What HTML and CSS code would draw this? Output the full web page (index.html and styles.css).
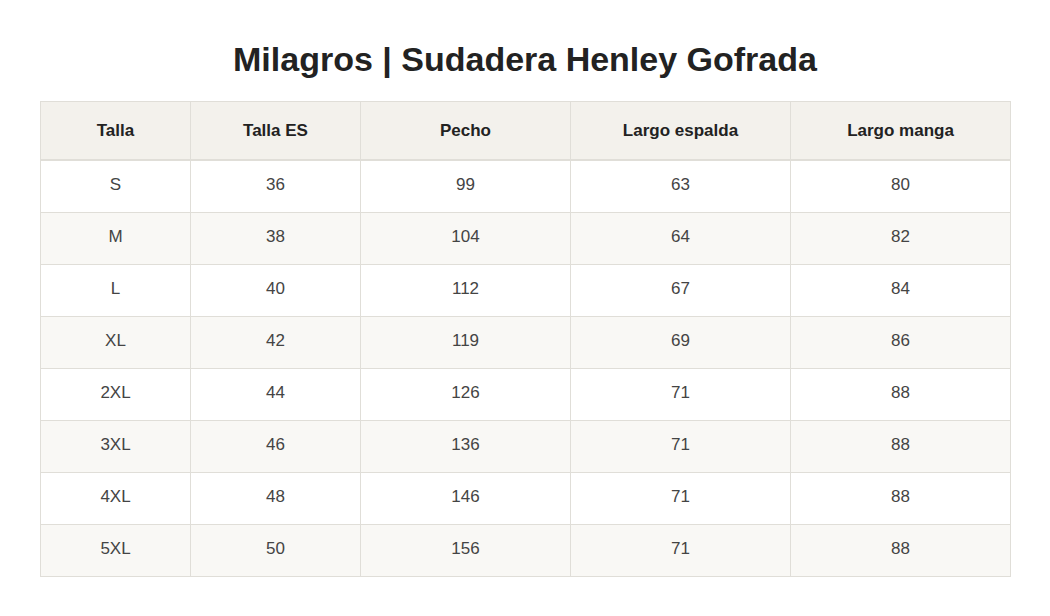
FILE: index.html
```html
<!DOCTYPE html>
<html lang="es">
<head>
<meta charset="utf-8">
<title>Milagros | Sudadera Henley Gofrada</title>
<link rel="stylesheet" href="styles.css">
</head>
<body>
<main class="page">
  <h1 class="title">Milagros | Sudadera Henley Gofrada</h1>
  <table class="size-table">
    <colgroup>
      <col class="c1"><col class="c2"><col class="c3"><col class="c4"><col class="c5">
    </colgroup>
    <thead>
      <tr><th>Talla</th><th>Talla ES</th><th>Pecho</th><th>Largo espalda</th><th>Largo manga</th></tr>
    </thead>
    <tbody>
      <tr><td>S</td><td>36</td><td>99</td><td>63</td><td>80</td></tr>
      <tr><td>M</td><td>38</td><td>104</td><td>64</td><td>82</td></tr>
      <tr><td>L</td><td>40</td><td>112</td><td>67</td><td>84</td></tr>
      <tr><td>XL</td><td>42</td><td>119</td><td>69</td><td>86</td></tr>
      <tr><td>2XL</td><td>44</td><td>126</td><td>71</td><td>88</td></tr>
      <tr><td>3XL</td><td>46</td><td>136</td><td>71</td><td>88</td></tr>
      <tr><td>4XL</td><td>48</td><td>146</td><td>71</td><td>88</td></tr>
      <tr><td>5XL</td><td>50</td><td>156</td><td>71</td><td>88</td></tr>
    </tbody>
  </table>
</main>
</body>
</html>
```
FILE: styles.css
```css
html, body {
  margin: 0;
  padding: 0;
  background: #ffffff;
}
body {
  font-family: "Liberation Sans", Arial, sans-serif;
  color: #444;
}
.page {
  padding: 39px 40px 0 40px;
}
.title {
  margin: 0 0 22px 0;
  text-align: center;
  font-size: 34px;
  line-height: 40px;
  font-weight: bold;
  color: #222;
}
.size-table {
  width: 970px;
  border-collapse: collapse;
  table-layout: fixed;
  border: 1px solid #e0ded8;
}
.c1 { width: 150px; }
.c2 { width: 170px; }
.c3 { width: 210px; }
.c4 { width: 220px; }
.c5 { width: 220px; }
.size-table th,
.size-table td {
  border: 1px solid #e0ded8;
  text-align: center;
  font-size: 17px;
}
.size-table th {
  height: 56px;
  padding: 1px 0 0 0;
  background: #f3f1ec;
  color: #222;
  font-weight: bold;
  border-bottom: 2px solid #e0ded8;
}
.size-table td {
  height: 48px;
  padding: 0 0 3px 0;
  color: #444;
  background: #ffffff;
}
.size-table tbody tr:nth-child(even) td {
  background: #f9f8f5;
}
```
